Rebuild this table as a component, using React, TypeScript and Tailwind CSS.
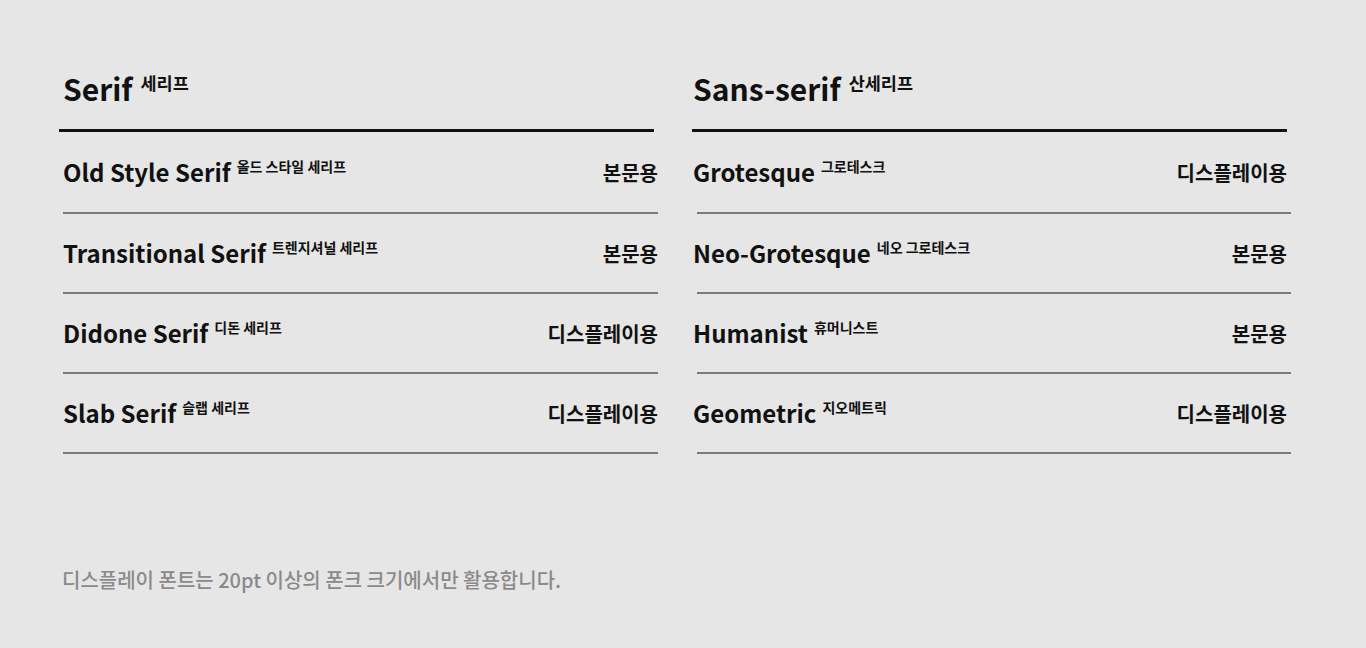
const serifRows = [
  { en: 'Old Style Serif', ko: '올드 스타일 세리프', use: '본문용' },
  { en: 'Transitional Serif', ko: '트렌지셔널 세리프', use: '본문용' },
  { en: 'Didone Serif', ko: '디돈 세리프', use: '디스플레이용' },
  { en: 'Slab Serif', ko: '슬랩 세리프', use: '디스플레이용' },
];

const sansRows = [
  { en: 'Grotesque', ko: '그로테스크', use: '디스플레이용' },
  { en: 'Neo-Grotesque', ko: '네오 그로테스크', use: '본문용' },
  { en: 'Humanist', ko: '휴머니스트', use: '본문용' },
  { en: 'Geometric', ko: '지오메트릭', use: '디스플레이용' },
];

type Row = { en: string; ko: string; use: string };

function Column({ title, sub, rows, right }: { title: string; sub: string; rows: Row[]; right?: boolean }) {
  return (
    <div className="w-[599px]">
      {/* Heading */}
      <div className={right ? 'pl-px' : 'pl-[4px]'}>
        <h2 className="h-[56px] flex items-start text-[30px] font-bold leading-none text-[#111] pt-[15px]">
          {title}
          <span className="ml-[8px] mt-[1px] text-[17.5px]">{sub}</span>
        </h2>
      </div>
      <div className="mt-[15px] w-[595px] h-[3px] bg-[#111]" />
      {rows.map((r, i) => (
        <div key={r.en} className={right ? 'ml-px' : 'ml-[4px]'}>
          <div className={i === 0 ? 'h-[80px] flex items-center justify-between' : 'h-[78px] flex items-center justify-between'}>
            <div className="flex items-start text-[24px] font-bold leading-none text-[#111]">
              {r.en}
              <span className="ml-[6px] -mt-[1px] text-[14px]">{r.ko}</span>
            </div>
            <div className={right ? 'mt-[2px] text-[20px] font-bold text-[#111] leading-none pr-[4px]' : 'mt-[2px] text-[20px] font-bold text-[#111] leading-none'}>
              {r.use}
            </div>
          </div>
          <div className={right ? 'ml-[4px] h-[2px] bg-[#7a7a7a]' : 'h-[2px] bg-[#7a7a7a]'} />
        </div>
      ))}
    </div>
  );
}

export default function App() {
  return (
    <main
      className="w-[1366px] h-[648px] bg-[#e6e6e6] overflow-hidden"
      style={{ fontFamily: '"Noto Sans CJK KR", "Noto Sans", sans-serif' }}
    >
      <div className="flex gap-[34px] pl-[59px] pt-[58px]">
        <Column title="Serif" sub="세리프" rows={serifRows} />
        <Column title="Sans-serif" sub="산세리프" rows={sansRows} right />
      </div>
      <p className="mt-[111px] pl-[62px] text-[20px] font-medium text-[#8a8a8a]">
        디스플레이 폰트는 20pt 이상의 폰크 크기에서만 활용합니다.
      </p>
    </main>
  );
}
